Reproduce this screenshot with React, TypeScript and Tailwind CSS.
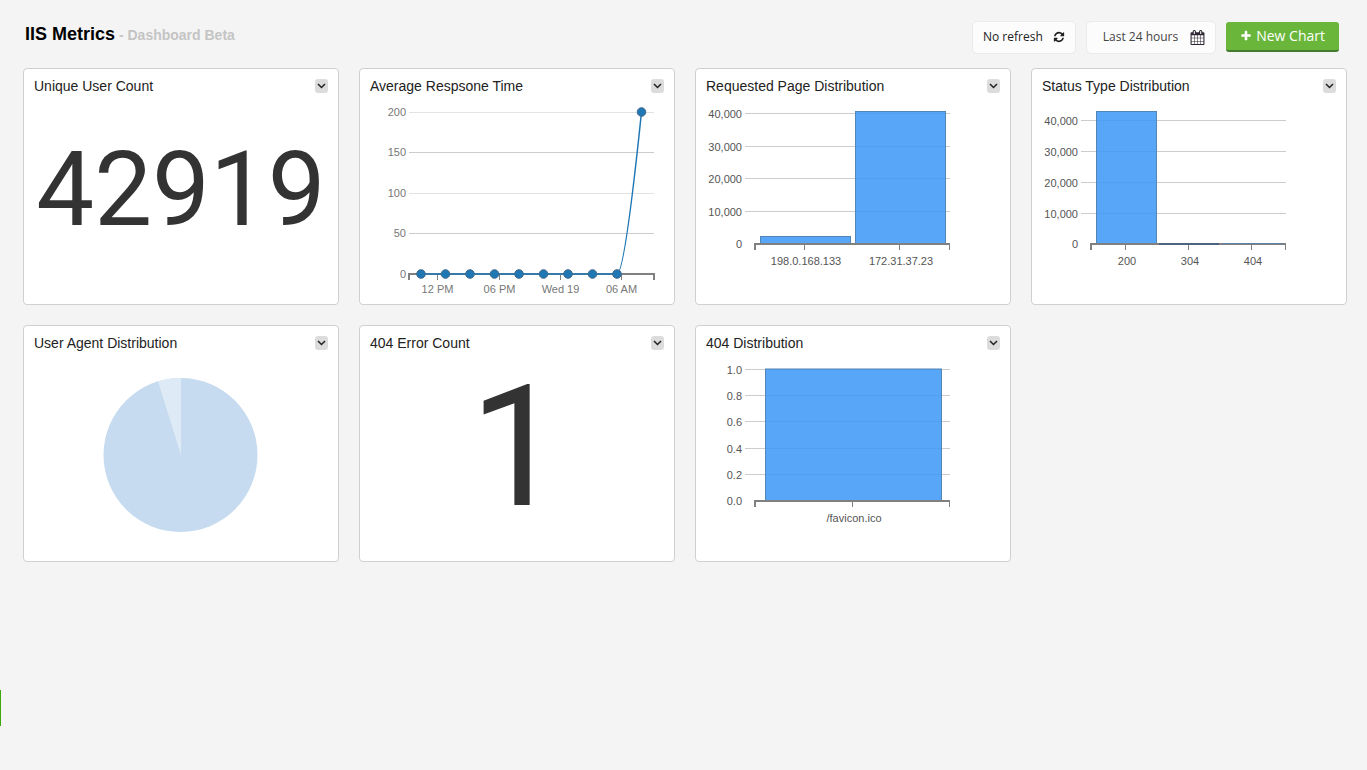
import type { ReactNode } from "react";

const REFRESH =
  "M1639 1056q0 5-1 7-64 268-268 434.5t-478 166.5q-146 0-282.5-55t-243.5-157l-129 129q-19 19-45 19t-45-19-19-45v-448q0-26 19-45t45-19h448q26 0 45 19t19 45-19 45l-137 137q71 66 161 102t187 36q134 0 250-65t186-179q11-17 53-117 8-23 30-23h192q13 0 22.5 9.5t9.5 22.5zm25-800v448q0 26-19 45t-45 19h-448q-26 0-45-19t-19-45 19-45l138-138q-148-137-349-137-134 0-250 65t-186 179q-11 17-53 117-8 23-30 23h-199q-13 0-22.5-9.5t-9.5-22.5v-7q65-268 270-434.5t480-166.5q146 0 284 55.5t245 156.5l130-129q19-19 45-19t45 19 19 45z";
const CALENDAR =
  "M192 1664h288v-288h-288v288zm352 0h320v-288h-320v288zm-352-352h288v-320h-288v320zm352 0h320v-320h-320v320zm-352-384h288v-288h-288v288zm736 736h320v-288h-320v288zm-384-736h320v-288h-320v288zm768 736h288v-288h-288v288zm-384-352h320v-320h-320v320zm-352-864v-288q0-13-9.5-22.5t-22.5-9.5h-64q-13 0-22.5 9.5t-9.5 22.5v288q0 13 9.5 22.5t22.5 9.5h64q13 0 22.5-9.5t9.5-22.5zm736 864h288v-320h-288v320zm-384-384h320v-288h-320v288zm384 0h288v-288h-288v288zm32-480v-288q0-13-9.5-22.5t-22.5-9.5h-64q-13 0-22.5 9.5t-9.5 22.5v288q0 13 9.5 22.5t22.5 9.5h64q13 0 22.5-9.5t9.5-22.5zm384-64v1280q0 52-38 90t-90 38h-1408q-52 0-90-38t-38-90v-1280q0-52 38-90t90-38h128v-96q0-66 47-113t113-47h64q66 0 113 47t47 113v96h384v-96q0-66 47-113t113-47h64q66 0 113 47t47 113v96h128q52 0 90 38t38 90z";
const PLUS =
  "M1600 736v192q0 40-28 68t-68 28h-416v416q0 40-28 68t-68 28h-192q-40 0-68-28t-28-68v-416h-416q-40 0-68-28t-28-68v-192q0-40 28-68t68-28h416v-416q0-40 28-68t68-28h192q40 0 68 28t28 68v416h416q40 0 68 28t28 68z";

function Icon({ path, className }: { path: string; className: string }) {
  return (
    <svg viewBox="0 0 1792 1792" className={className} fill="currentColor" aria-hidden="true">
      <path d={path} />
    </svg>
  );
}

function Card({ title, children }: { title: string; children: ReactNode }) {
  return (
    <section className="flex min-h-[237px] flex-col rounded-[4px] border border-[#d0d0d0] bg-white">
      <div className="flex h-[34px] items-center justify-between px-2.5">
        <h2 className="font-['Liberation_Sans',Arial,sans-serif] text-sm text-[#222]">{title}</h2>
        <button
          type="button"
          aria-label={`${title} options`}
          className="flex h-3.5 w-[13px] items-center justify-center rounded-[3px] bg-[#dcdcdc] text-[#222]"
        >
          <svg viewBox="0 0 9 6" className="h-1.5 w-[9px]" fill="none" stroke="currentColor" strokeWidth="1.5">
            <path d="M1 1l3.5 3.5L8 1" />
          </svg>
        </button>
      </div>
      {children}
    </section>
  );
}

function ChartFrame({ label, children }: { label: string; children: ReactNode }) {
  return (
    <svg
      viewBox="0 0 314 201"
      role="img"
      aria-label={label}
      className="block h-auto w-full font-['Liberation_Sans',Arial,sans-serif] text-[11px]"
    >
      {children}
    </svg>
  );
}

type Mark = { at: number; text: string };
type Bar = { x: number; y: number; width: number };

function BarChart({
  label,
  rows,
  bars,
  ticks,
  children,
}: {
  label: string;
  rows: Mark[];
  bars: Bar[];
  ticks: Mark[];
  children?: ReactNode;
}) {
  return (
    <ChartFrame label={label}>
      {rows.map((r) => (
        <g key={r.text}>
          <path d={`M49 ${r.at}H254`} stroke="#ccc" />
          <text x="46" y={r.at + 4} textAnchor="end" fill="#555">
            {r.text}
          </text>
        </g>
      ))}
      <text x="46" y="145" textAnchor="end" fill="#555">
        {rows.some((r) => r.text.includes(".")) ? "0.0" : "0"}
      </text>
      {bars.map((b) => (
        <rect
          key={b.x}
          x={b.x}
          y={b.y}
          width={b.width}
          height={141 - b.y}
          fill="#3996f6"
          fillOpacity="0.85"
          stroke="#5585b5"
        />
      ))}
      <path d="M59 147V141H253.500V147" fill="none" stroke="#808080" strokeWidth="1" />
      <path d="M58 141H254M59 141V147" fill="none" stroke="#808080" strokeWidth="2" />
      {ticks.map((t) => (
        <g key={t.text}>
          <path d={`M${t.at} 141V147`} stroke="#808080" />
          <text x={t.at + 1.5} y="162" textAnchor="middle" fill="#555">
            {t.text}
          </text>
        </g>
      ))}
      {children}
    </ChartFrame>
  );
}

const points = [61, 85.5, 110, 134.5, 159, 183.5, 208, 232.5, 257];

function LineChart() {
  const rows = [
    { at: 9.5, text: "200", color: "#e3e3e3" },
    { at: 49.5, text: "150", color: "#ccc" },
    { at: 90.5, text: "100", color: "#e3e3e3" },
    { at: 130.5, text: "50", color: "#ccc" },
  ];
  const ticks = [
    { at: 77.5, text: "12 PM" },
    { at: 139.5, text: "06 PM" },
    { at: 200.5, text: "Wed 19" },
    { at: 261.5, text: "06 AM" },
  ];
  return (
    <ChartFrame label="Average response time over the last 24 hours">
      {rows.map((r) => (
        <g key={r.text}>
          <path d={`M49 ${r.at}H294`} stroke={r.color} />
          <text x="46" y={r.at + 3.5} textAnchor="end" fill="#777">
            {r.text}
          </text>
        </g>
      ))}
      <text x="46" y="175" textAnchor="end" fill="#777">
        0
      </text>
      <path d="M49 177V171H294V177" fill="none" stroke="#808080" strokeWidth="2" />
      {ticks.map((t) => (
        <g key={t.text}>
          <path d={`M${t.at} 171V177`} stroke="#808080" />
          <text x={t.at} y="190" textAnchor="middle" fill="#777">
            {t.text}
          </text>
        </g>
      ))}
      <path d="M61 171H257C264 171 276 62 281.500 9" fill="none" stroke="#1f77b4" strokeWidth="1.5" />
      {points.map((x) => (
        <circle key={x} cx={x} cy="171" r="4.300" fill="#1f77b4" stroke="#41688c" />
      ))}
      <circle cx="281.500" cy="9" r="4.300" fill="#1f77b4" stroke="#41688c" />
    </ChartFrame>
  );
}

export default function App() {
  return (
    <div className="min-h-screen bg-[#f4f4f4]">
      <header className="flex h-[68px] items-center justify-between pt-1.5 pr-7 pl-[25px]">
        <h1 className="pb-1.5 font-['Liberation_Sans',Arial,sans-serif] text-lg font-bold text-black">
          IIS Metrics
          <span className="text-sm text-[#c4c4c4]"> - Dashboard Beta</span>
        </h1>
        <div className="flex items-center gap-2.5 font-['Open_Sans',sans-serif] text-xs">
          <button
            type="button"
            className="flex h-[33px] items-center gap-2.5 rounded-[5px] border border-[#ebebeb] bg-[#fcfcfc] px-2.5 text-[#222]"
          >
            No refresh
            <Icon path={REFRESH} className="size-3" />
          </button>
          <button
            type="button"
            className="flex h-[33px] items-center gap-3 rounded-[5px] border border-[#ebebeb] bg-[#fcfcfc] pr-2.5 pl-4 text-[#444]"
          >
            Last 24 hours
            <Icon path={CALENDAR} className="size-[15px] text-[#2e2633]" />
          </button>
          <button
            type="button"
            className="flex h-[30px] items-center gap-1 rounded-[3px] border-b-2 border-[#457a2e] bg-[#69b63b] px-3.5 text-sm font-medium text-white"
          >
            <Icon path={PLUS} className="size-3" />
            New Chart
          </button>
        </div>
      </header>

      <main className="grid grid-cols-4 gap-5 pr-5 pl-[23px]">
        <Card title="Unique User Count">
          <p className="pt-[27px] text-center font-['Roboto',sans-serif] text-[103px] leading-[120px] text-[#333]">
            42919
          </p>
        </Card>
        <Card title="Average Respsone Time">
          <LineChart />
        </Card>
        <Card title="Requested Page Distribution">
          <BarChart
            label="Requests by host"
            rows={[
              { at: 10.5, text: "40,000" },
              { at: 43.5, text: "30,000" },
              { at: 75.5, text: "20,000" },
              { at: 108.5, text: "10,000" },
            ]}
            bars={[
              { x: 64.5, y: 133.5, width: 90 },
              { x: 159.5, y: 8.5, width: 90 },
            ]}
            ticks={[
              { at: 108.5, text: "198.0.168.133" },
              { at: 203.5, text: "172.31.37.23" },
            ]}
          />
        </Card>
        <Card title="Status Type Distribution">
          <BarChart
            label="Requests by status"
            rows={[
              { at: 17.5, text: "40,000" },
              { at: 48.5, text: "30,000" },
              { at: 79.5, text: "20,000" },
              { at: 110.5, text: "10,000" },
            ]}
            bars={[{ x: 64.5, y: 8.5, width: 60 }]}
            ticks={[
              { at: 93.5, text: "200" },
              { at: 156.5, text: "304" },
              { at: 219.5, text: "404" },
            ]}
          >
            <path d="M127 141H187" stroke="#4c6482" strokeWidth="2" />
            <path d="M190 140.500H251" stroke="#5c82a8" />
          </BarChart>
        </Card>
        <Card title="User Agent Distribution">
          <ChartFrame label="User agents">
            <circle cx="156.500" cy="95" r="77" fill="#c6dbef" />
            <path d="M157 95L134 21.500A77 77 0 0 1 157 18Z" fill="#deebf7" />
          </ChartFrame>
        </Card>
        <Card title="404 Error Count">
          <p className="pt-0.5 text-center font-['Roboto',sans-serif] text-[169px] leading-[170px] text-[#333]">1</p>
        </Card>
        <Card title="404 Distribution">
          <BarChart
            label="Missing pages"
            rows={[
              { at: 9.5, text: "1.0" },
              { at: 35.5, text: "0.8" },
              { at: 61.5, text: "0.6" },
              { at: 88.5, text: "0.4" },
              { at: 114.5, text: "0.2" },
            ]}
            bars={[{ x: 69.5, y: 9, width: 176 }]}
            ticks={[{ at: 156.5, text: "/favicon.ico" }]}
          />
        </Card>
      </main>

      <div className="fixed bottom-11 left-0 h-9 w-px bg-[#3fa60c]" />
    </div>
  );
}
